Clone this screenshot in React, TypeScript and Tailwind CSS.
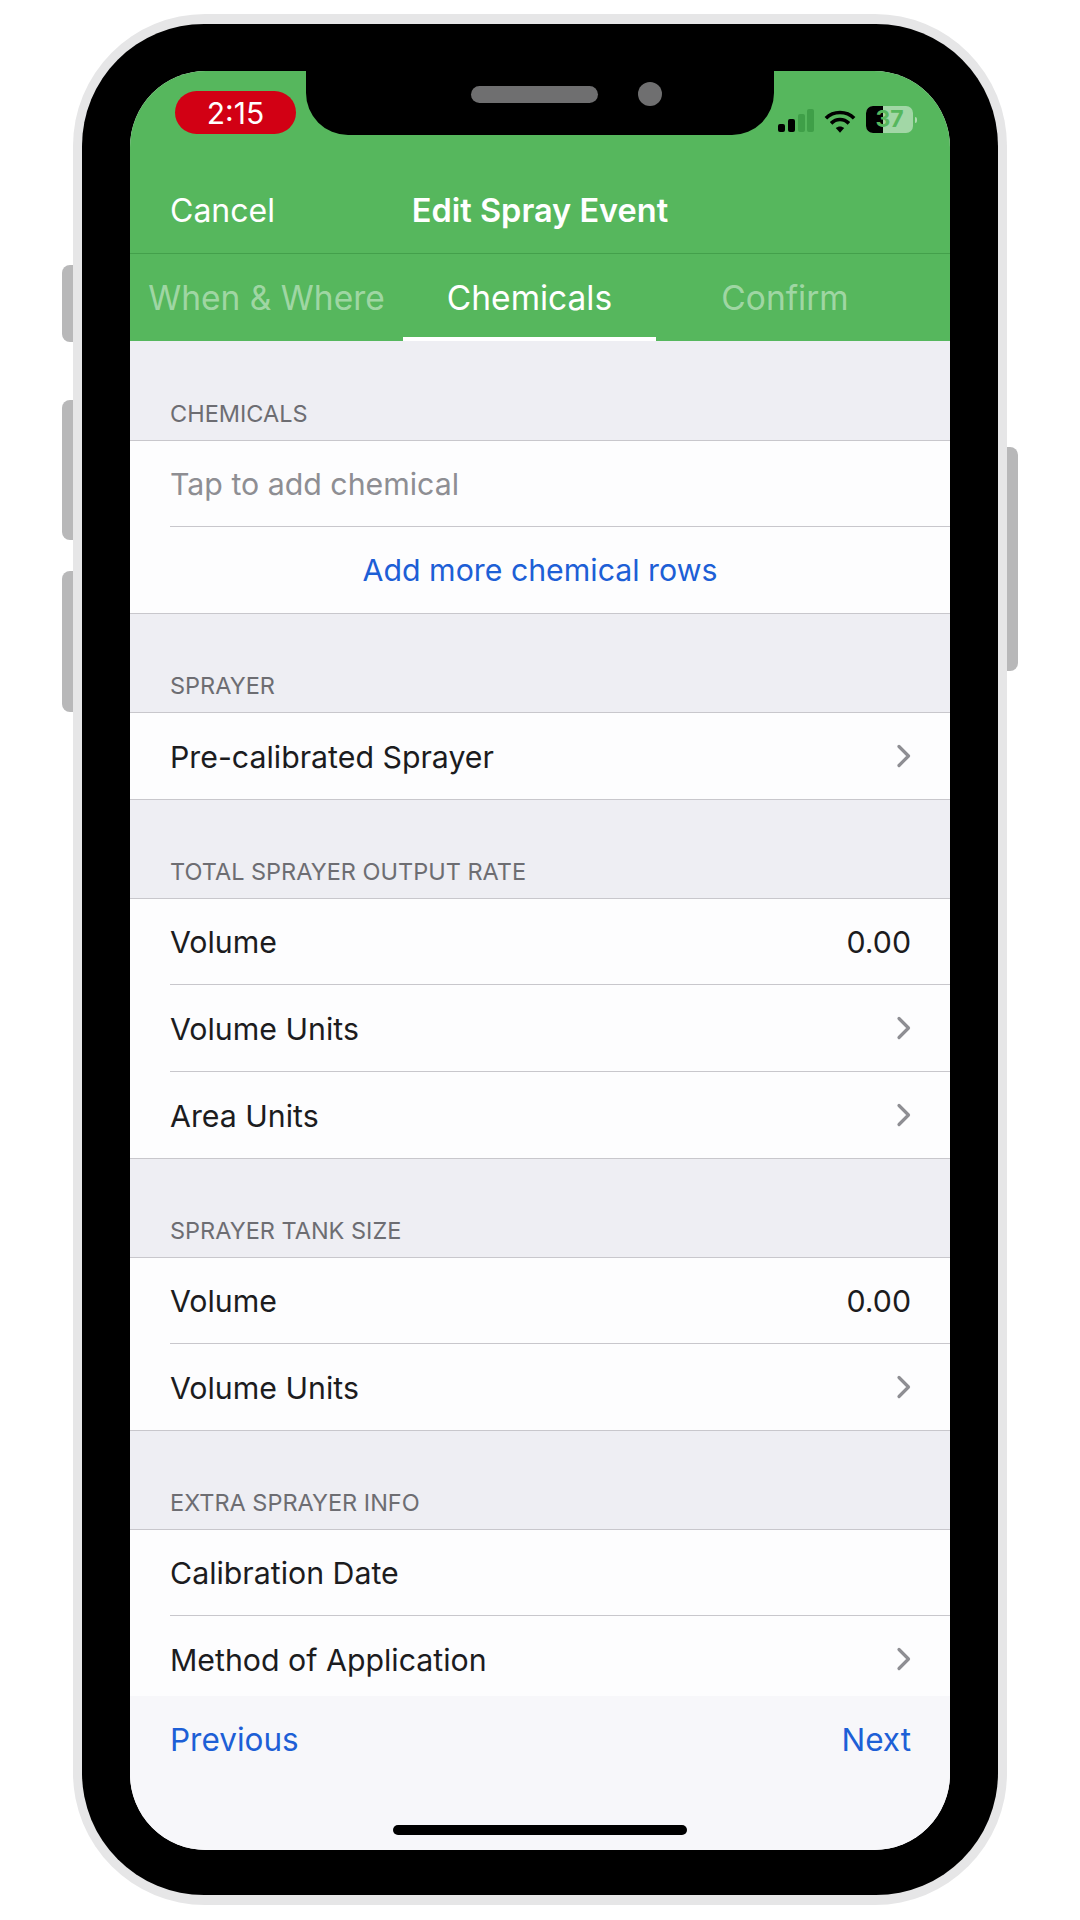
const Chevron = () => (
  <svg width="16" height="24" viewBox="0 0 16 24" fill="none" className="shrink-0">
    <path d="M4 2.5 L13.5 12 L4 21.5" stroke="#8e8e93" strokeWidth="3.2" strokeLinecap="round" strokeLinejoin="round" />
  </svg>
);

const Row = ({ label, value, chevron, last, muted, tall }: { label: string; value?: string; chevron?: boolean; last?: boolean; muted?: boolean; tall?: boolean }) => (
  <div className={`${tall ? "h-[87px]" : "h-[86px]"} pl-10 shrink-0`}>
    <div className={`h-full flex items-center justify-between pr-[39px] ${last ? "" : "border-b border-[#c8c7cc]"}`}>
      <span className={`${muted ? "text-[#8e8e93]" : "text-[#1c1c1e]"} ${chevron ? "pt-[2px]" : ""}`}>{label}</span>
      {value && <span className="text-[#1c1c1e]">{value}</span>}
      {chevron && <Chevron />}
    </div>
  </div>
);

const Section = ({ title, first, children }: { title: string; first?: boolean; children: React.ReactNode }) => (
  <div className="shrink-0">
    <div className={`${first ? "h-[99px]" : "h-[98px]"} flex items-end pl-10 pb-[12px] text-[23.5px] leading-[28px] text-[#6d6d72] uppercase`}>{title}</div>
    <div className="bg-[#fdfdfe] border-y border-[#c8c7cc]">{children}</div>
  </div>
);

export default function App() {
  return (
    <div className="w-[1080px] h-[1920px] bg-white pt-[14px] pl-[73px] font-['Inter','Liberation_Sans',sans-serif] overflow-hidden">
      <div className="relative w-[934px] h-[1891px] rounded-[132px] bg-[#e6e6e7] p-[9px] pt-[10px] pb-[10px]">
        <div className="absolute left-[-11px] top-[251px] w-[11px] h-[77px] rounded-l-[8px] bg-[#b8b8b9]" />
        <div className="absolute left-[-11px] top-[386px] w-[11px] h-[140px] rounded-l-[8px] bg-[#b8b8b9]" />
        <div className="absolute left-[-11px] top-[557px] w-[11px] h-[141px] rounded-l-[8px] bg-[#b8b8b9]" />
        <div className="absolute right-[-11px] top-[433px] w-[11px] h-[224px] rounded-r-[8px] bg-[#b8b8b9]" />

        <div className="w-full h-full rounded-[122px] bg-black pl-[48px] pr-[47px] pt-[47px] pb-[45px]">
          <div className="relative w-[820px] h-[1779px] rounded-[76px] overflow-hidden bg-[#f7f7fa] flex flex-col text-[30.3px] leading-[36px]">
            {/* notch */}
            <div className="absolute left-[176px] top-0 w-[468px] h-[64px] bg-black rounded-b-[42px]">
              <div className="absolute left-[165px] top-[15px] w-[127px] h-[17px] rounded-full bg-[#6f6f70]" />
              <div className="absolute left-[332px] top-[11px] w-[24px] h-[24px] rounded-full bg-[#6f6f70]" />
            </div>

            <div className="bg-[#56b75d] shrink-0">
              <div className="h-[183px] relative border-b border-[#43a04b]">
                <div className="absolute left-[45px] top-[20px] w-[121px] h-[43px] pt-px rounded-full bg-[#d20014] flex items-center justify-center text-white text-[30px] leading-[34px]">2:15</div>
                {/* status icons */}
                <svg className="absolute left-[647px] top-[38px]" width="38" height="24" viewBox="0 0 38 24">
                  <rect x="1" y="15" width="7" height="8" rx="2" fill="#000" />
                  <rect x="11" y="10" width="7" height="13" rx="2" fill="#000" />
                  <rect x="21" y="5" width="7" height="18" rx="2" fill="#3f9f48" />
                  <rect x="30" y="0" width="7" height="23" rx="2" fill="#3f9f48" />
                </svg>
                <svg className="absolute left-[694px] top-[38px]" width="32" height="25" viewBox="0 0 34 26" fill="none" stroke="#000" strokeWidth="3.8">
                  <path d="M2 9.5 C10 1.5 24 1.5 32 9.5" />
                  <path d="M7.5 15 C13 9.5 21 9.5 26.5 15" />
                  <path d="M12.5 20 L17 25 L21.5 20 C19 17.6 15 17.6 12.5 20 Z" fill="#000" stroke="none" />
                </svg>
                <div className="absolute left-[736px] top-[35px] w-[47px] h-[27px] rounded-[7px] bg-white/45 overflow-hidden flex items-center justify-center text-[#56b75d] text-[23px] leading-[27px] font-bold">
                  <div className="absolute left-0 top-0 w-[17px] h-full bg-black" />
                  <span className="relative">37</span>
                </div>
                <div className="absolute left-[785px] top-[46px] w-[2px] h-[6px] rounded-r bg-white/50" />

                <div className="absolute left-10 right-0 top-[122px] text-white text-[32px] leading-[36px]">Cancel</div>
                <div className="absolute left-0 right-0 top-[122px] text-center text-white font-semibold text-[32.5px] leading-[36px]">Edit Spray Event</div>
              </div>
              <div className="h-[87px] flex text-center text-[33.5px] leading-[36px]">
                <div className="w-[273px] pt-[26px] text-white/45 whitespace-nowrap">When &amp; Where</div>
                <div className="w-[253px] pt-[26px] text-white border-b-4 border-white">Chemicals</div>
                <div className="w-[258px] pt-[26px] text-white/45">Confirm</div>
              </div>
            </div>

            <div className="flex-1 min-h-0 overflow-hidden bg-[#eeeef3] flex flex-col">
              <Section title="Chemicals" first>
                <Row label="Tap to add chemical" muted />
                <div className="h-[86px] flex items-center justify-center text-[#1d5fd6]">Add more chemical rows</div>
              </Section>
              <Section title="Sprayer">
                <Row label="Pre-calibrated Sprayer" chevron last />
              </Section>
              <Section title="Total Sprayer Output Rate">
                <Row label="Volume" value="0.00" />
                <Row label="Volume Units" chevron tall />
                <Row label="Area Units" chevron last />
              </Section>
              <Section title="Sprayer Tank Size">
                <Row label="Volume" value="0.00" />
                <Row label="Volume Units" chevron last />
              </Section>
              <Section title="Extra Sprayer Info">
                <Row label="Calibration Date" />
                <Row label="Method of Application" chevron last />
              </Section>
            </div>

            <div className="h-[154px] shrink-0 bg-[#f7f7fa] relative flex justify-between pl-10 pr-[39px] pt-[26px] text-[31.5px] text-[#1d5fd6]">
              <span>Previous</span>
              <span>Next</span>
              <div className="absolute left-[263px] top-[129px] w-[294px] h-[10px] rounded-full bg-black" />
            </div>
          </div>
        </div>
      </div>
    </div>
  );
}
